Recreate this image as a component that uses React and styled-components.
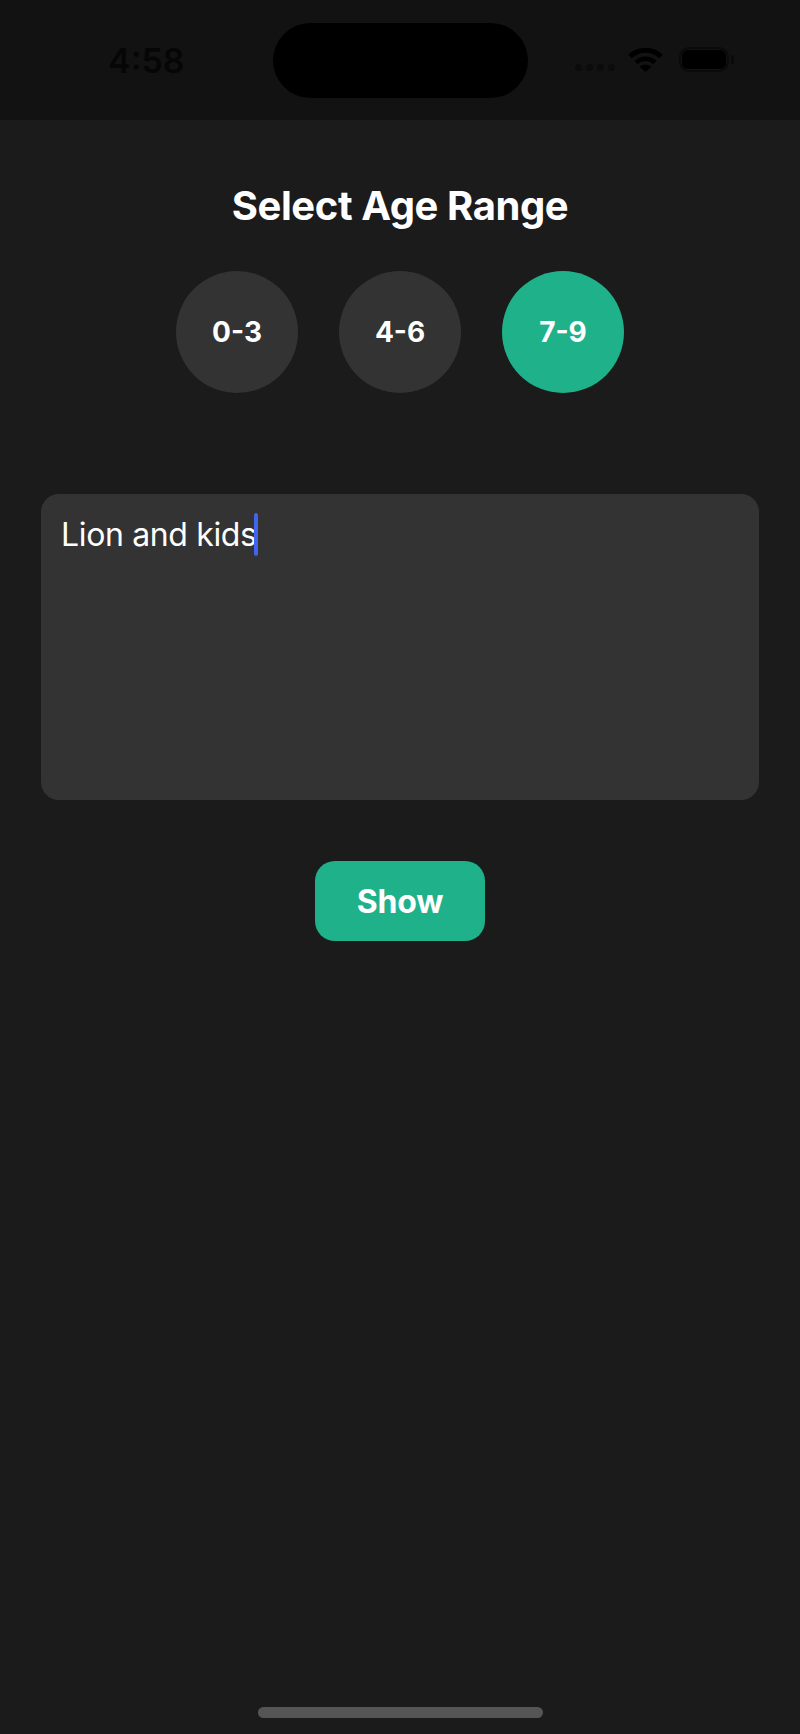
import React from "react";
import styled, { createGlobalStyle } from "styled-components";

const ages = ["0-3", "4-6", "7-9"];

const GlobalStyle = createGlobalStyle`
  * {
    box-sizing: border-box;
  }
  body {
    margin: 0;
    background: #1b1b1b;
    font-family: Inter, "Liberation Sans", sans-serif;
  }
`;

const App = () => {
  return (
    <Page>
      <GlobalStyle />
      <StatusBar>
        <Time>4:58</Time>
        <Island />
        <StatusIcons>
          <Signal>
            {[0, 1, 2, 3].map((dot) => (
              <SignalDot key={dot} />
            ))}
          </Signal>
          <svg width="35" height="25" viewBox="0 0 35 25" fill="none">
            <path
              d="M2 9.5C10.5 1 24.5 1 33 9.5"
              stroke="#000"
              strokeWidth="5"
            />
            <path
              d="M8 15.5C13.5 10.5 21.5 10.5 27 15.5"
              stroke="#000"
              strokeWidth="4.6"
            />
            <path d="M11.5 19.5C14.5 17 20.5 17 23.5 19.5L17.5 25Z" fill="#000" />
          </svg>
          <Battery>
            <BatteryLevel />
            <BatteryNub />
          </Battery>
        </StatusIcons>
      </StatusBar>

      <Content>
        <Title>Select Age Range</Title>
        <AgeRow>
          {ages.map((age) => (
            <AgeButton key={age} $active={age === "7-9"}>
              {age}
            </AgeButton>
          ))}
        </AgeRow>
        <PromptBox>
          Lion and kids
          <Caret />
        </PromptBox>
        <ShowButton>Show</ShowButton>
      </Content>

      <HomeIndicator />
    </Page>
  );
};

const Page = styled.div`
  display: flex;
  flex-direction: column;
  width: 800px;
  height: 1734px;
  background: #1b1b1b;
  overflow: hidden;
`;

const StatusBar = styled.header`
  display: flex;
  align-items: flex-start;
  height: 120px;
  padding: 23px 66px 0 108px;
  background: #121212;
`;

const Time = styled.span`
  width: 165px;
  margin-top: 17px;
  font-size: 34px;
  line-height: 41px;
  font-weight: 600;
  color: #060606;
`;

const Island = styled.div`
  width: 255px;
  height: 75px;
  border-radius: 38px;
  background: #000;
`;

const StatusIcons = styled.div`
  display: flex;
  align-items: flex-start;
  margin: 24px 0 0 47px;
`;

const Signal = styled.div`
  display: flex;
  gap: 4px;
  width: 53px;
  padding-top: 17px;
`;

const SignalDot = styled.span`
  width: 7px;
  height: 7px;
  border-radius: 50%;
  background: #0c0c0c;
`;

const Battery = styled.div`
  position: relative;
  width: 50px;
  height: 25px;
  margin-left: 16px;
  padding: 1px;
  border: 2px solid #0a0a0a;
  border-radius: 10px;
`;

const BatteryLevel = styled.div`
  height: 100%;
  border-radius: 6px;
  background: #000;
`;

const BatteryNub = styled.span`
  position: absolute;
  top: 6px;
  right: -7px;
  width: 3px;
  height: 9px;
  border-radius: 0 3px 3px 0;
  background: #0a0a0a;
`;

const Content = styled.main`
  display: flex;
  flex-direction: column;
  align-items: center;
  padding: 0 41px;
`;

const Title = styled.h1`
  margin: 62px 0 0;
  font-size: 40px;
  line-height: 48px;
  font-weight: 700;
  letter-spacing: -0.42px;
  color: #fff;
`;

const AgeRow = styled.div`
  display: flex;
  gap: 41px;
  margin-top: 41px;
`;

const AgeButton = styled.button`
  width: 122px;
  height: 122px;
  padding: 0;
  border: none;
  border-radius: 50%;
  background: ${(props) => (props.$active ? "#1fb28a" : "#333333")};
  color: #fff;
  font-family: inherit;
  font-size: 28px;
  font-weight: 700;
`;

const PromptBox = styled.div`
  width: 718px;
  height: 306px;
  margin-top: 101px;
  padding: 19px 21px 0 20px;
  border-radius: 18px;
  background: #333333;
  color: #fff;
  font-size: 32px;
  line-height: 39px;
  letter-spacing: -0.35px;
`;

const Caret = styled.span`
  display: inline-block;
  width: 4px;
  height: 43px;
  margin-left: -3px;
  border-radius: 2px;
  background: #4064f0;
  vertical-align: -10px;
`;

const ShowButton = styled.button`
  width: 170px;
  height: 80px;
  margin-top: 61px;
  padding: 0;
  border: none;
  border-radius: 20px;
  background: #1fb28a;
  color: #fff;
  font-family: inherit;
  font-size: 32px;
  font-weight: 700;
  letter-spacing: -0.2px;
`;

const HomeIndicator = styled.div`
  align-self: center;
  width: 285px;
  height: 11px;
  margin-top: auto;
  margin-bottom: 16px;
  border-radius: 6px;
  background: #555555;
`;

export default App;
